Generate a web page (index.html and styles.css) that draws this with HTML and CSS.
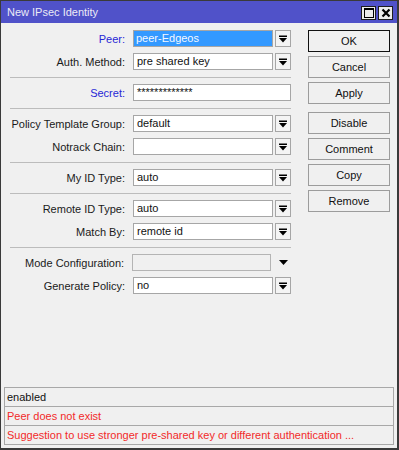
FILE: index.html
```html
<!DOCTYPE html>
<html lang="en">
  <head>
    <meta charset="UTF-8" />
    <title>New IPsec Identity</title>
    <link rel="stylesheet" href="styles.css">
  </head>
  <body>
    <div class="window">
      <div class="titlebar">
        <span class="title">New IPsec Identity</span>
        <div class="title-buttons">
          <span class="tbtn">
            <svg width="10" height="10" viewBox="0 0 10 10"><rect x="0.5" y="0.5" width="9" height="9" fill="none" stroke="#000"/><rect x="0" y="0" width="10" height="2" fill="#000"/></svg>
          </span>
          <span class="tbtn">
            <svg width="10" height="10" viewBox="0 0 10 10"><path d="M1.5 1.5 L8.5 8.5 M8.5 1.5 L1.5 8.5" stroke="#000" stroke-width="2.2"/></svg>
          </span>
        </div>
      </div>

      <div class="main">
        <div class="form">
          <div class="section">
            <div class="row">
              <label class="blue">Peer:</label>
              <div class="field selected">peer-Edgeos</div>
              <span class="drop"><svg width="8" height="8" viewBox="0 0 8 8"><rect x="0" y="0.5" width="8" height="1.5" fill="#000"/><path d="M0 3 H8 L4 7.5 Z" fill="#000"/></svg></span>
            </div>
            <div class="row">
              <label>Auth. Method:</label>
              <div class="field">pre shared key</div>
              <span class="drop"><svg width="8" height="8" viewBox="0 0 8 8"><rect x="0" y="0.5" width="8" height="1.5" fill="#000"/><path d="M0 3 H8 L4 7.5 Z" fill="#000"/></svg></span>
            </div>
          </div>
          <hr class="sep" />
          <div class="section">
            <div class="row">
              <label class="blue">Secret:</label>
              <div class="field wide">*************</div>
            </div>
          </div>
          <hr class="sep" />
          <div class="section">
            <div class="row">
              <label>Policy Template Group:</label>
              <div class="field">default</div>
              <span class="drop"><svg width="8" height="8" viewBox="0 0 8 8"><rect x="0" y="0.5" width="8" height="1.5" fill="#000"/><path d="M0 3 H8 L4 7.5 Z" fill="#000"/></svg></span>
            </div>
            <div class="row">
              <label>Notrack Chain:</label>
              <div class="field"></div>
              <span class="drop"><svg width="8" height="8" viewBox="0 0 8 8"><rect x="0" y="0.5" width="8" height="1.5" fill="#000"/><path d="M0 3 H8 L4 7.5 Z" fill="#000"/></svg></span>
            </div>
          </div>
          <hr class="sep" />
          <div class="section">
            <div class="row">
              <label>My ID Type:</label>
              <div class="field">auto</div>
              <span class="drop"><svg width="8" height="8" viewBox="0 0 8 8"><rect x="0" y="0.5" width="8" height="1.5" fill="#000"/><path d="M0 3 H8 L4 7.5 Z" fill="#000"/></svg></span>
            </div>
          </div>
          <hr class="sep" />
          <div class="section">
            <div class="row">
              <label>Remote ID Type:</label>
              <div class="field">auto</div>
              <span class="drop"><svg width="8" height="8" viewBox="0 0 8 8"><rect x="0" y="0.5" width="8" height="1.5" fill="#000"/><path d="M0 3 H8 L4 7.5 Z" fill="#000"/></svg></span>
            </div>
            <div class="row">
              <label>Match By:</label>
              <div class="field">remote id</div>
              <span class="drop"><svg width="8" height="8" viewBox="0 0 8 8"><rect x="0" y="0.5" width="8" height="1.5" fill="#000"/><path d="M0 3 H8 L4 7.5 Z" fill="#000"/></svg></span>
            </div>
          </div>
          <hr class="sep" />
          <div class="section">
            <div class="row">
              <label>Mode Configuration:</label>
              <div class="field disabled"></div>
              <span class="drop plain"><svg width="9" height="5" viewBox="0 0 9 5"><path d="M0 0 H9 L4.5 5 Z" fill="#000"/></svg></span>
            </div>
            <div class="row">
              <label>Generate Policy:</label>
              <div class="field">no</div>
              <span class="drop"><svg width="8" height="8" viewBox="0 0 8 8"><rect x="0" y="0.5" width="8" height="1.5" fill="#000"/><path d="M0 3 H8 L4 7.5 Z" fill="#000"/></svg></span>
            </div>
          </div>
        </div>

        <div class="buttons">
          <button class="btn default">OK</button>
          <button class="btn">Cancel</button>
          <button class="btn">Apply</button>
          <button class="btn spaced">Disable</button>
          <button class="btn">Comment</button>
          <button class="btn">Copy</button>
          <button class="btn">Remove</button>
        </div>
      </div>

      <div class="status">
        <div class="status-row">enabled</div>
        <div class="status-row error">Peer does not exist</div>
        <div class="status-row error">Suggestion to use stronger pre-shared key or different authentication ...</div>
      </div>
    </div>
  </body>
</html>
```

FILE: styles.css
```css
* {
  box-sizing: border-box;
}
body {
  margin: 0;
  font-family: "Liberation Sans", Arial, sans-serif;
  font-size: 11px;
  color: #1a1a1a;
  background: #f0f0f0;
}
.window {
  width: 399px;
  height: 450px;
  border: 1px solid #3a3a3a;
  border-right-width: 2px;
  border-bottom-width: 2px;
  background: #f0f0f0;
  display: flex;
  flex-direction: column;
}
.titlebar {
  height: 22px;
  background: #5052c9;
  display: flex;
  align-items: flex-start;
  justify-content: space-between;
  padding: 0 4px 0 6px;
}
.title {
  color: #eceaf6;
  font-size: 11px;
  line-height: 21px;
  padding-top: 1px;
}
.title-buttons {
  display: flex;
  gap: 2px;
  margin-top: 5px;
}
.tbtn {
  width: 15px;
  height: 14px;
  background: #ececec;
  border: 1px solid #1e1e1e;
  display: flex;
  align-items: center;
  justify-content: center;
}
.main {
  flex: 1;
  display: flex;
  padding: 7px 0 0 9px;
}
.form {
  width: 281px;
}
.section {
  display: flex;
  flex-direction: column;
  gap: 6px;
}
.sep {
  border: none;
  border-top: 1px solid #bcbcbc;
  margin: 7px 0 6px;
  height: 0;
}
.row {
  display: flex;
  align-items: center;
  height: 17px;
}
.row label {
  width: 117px;
  text-align: right;
  padding-right: 2px;
  margin-right: 6px;
  color: #1a1a1a;
  white-space: nowrap;
}
.row label.blue {
  color: #2727d6;
}
.field {
  width: 140px;
  height: 17px;
  background: #fff;
  border: 1px solid #a6a6a6;
  padding: 0 3px;
  line-height: 15px;
  color: #111;
  white-space: nowrap;
  overflow: hidden;
}
.field.wide {
  width: 158px;
}
.field.selected {
  background: #3399ff;
  color: #f4f8ff;
  border-color: #a6a6a6;
  padding-left: 2px;
}
.field.disabled {
  background: #f0f0f0;
  border-color: #b4b4b4;
}
.drop {
  width: 16px;
  height: 17px;
  margin-left: 2px;
  border: 1px solid #a6a6a6;
  background: #f4f4f4;
  display: flex;
  align-items: center;
  justify-content: center;
}
.drop.plain {
  border: none;
  background: none;
  margin-left: 4px;
}
.buttons {
  margin-left: 17px;
  display: flex;
  flex-direction: column;
  gap: 4px;
}
.btn {
  width: 82px;
  height: 22px;
  font-family: "Liberation Sans", Arial, sans-serif;
  font-size: 11px;
  color: #111;
  background: #f0f0f0;
  border: 1px solid #9c9c9c;
  padding: 0;
}
.btn.default {
  border-color: #111;
}
.btn.spaced {
  margin-top: 4px;
}
.status {
  margin: 0 3px 3px 3px;
  border: 1px solid #a8a8a8;
}
.status-row {
  height: 19px;
  line-height: 18px;
  padding-left: 2px;
  border-top: 1px solid #a8a8a8;
  color: #111;
}
.status-row:first-child {
  border-top: none;
  height: 18px;
}
.status-row.error {
  color: #f22a2a;
}
```
